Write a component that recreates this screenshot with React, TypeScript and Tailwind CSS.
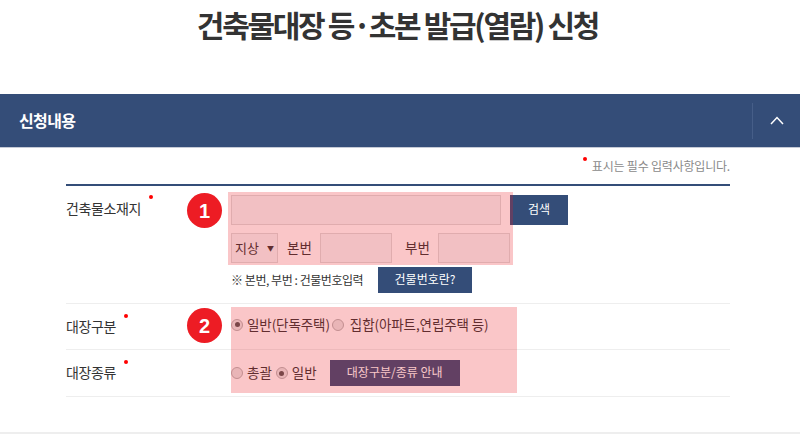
export default function App() {
  return (
    <div className="relative h-[447px] w-[800px] overflow-hidden bg-white font-['Noto_Sans_CJK_KR','Liberation_Sans',sans-serif] text-[#333]">
      <h1 className="flex h-[94px] justify-center pt-[4px] pr-[5px] text-[30px] leading-[40px] font-bold tracking-[-2.3px] text-[#333]">건축물대장 등·초본 발급(열람) 신청</h1>

      <div className="flex h-[54px] items-center justify-between border-b border-[#c5cad6] bg-[#344d78] pb-[2px] pl-[19px]">
        <h2 className="text-[16px] font-bold tracking-[-0.6px] text-white">신청내용</h2>
        <div className="mt-[2px] flex h-[36px] w-[48px] items-center justify-center border-l border-[#465e88]">
          <svg width="14" height="9" viewBox="0 0 14 9" fill="none" stroke="#fff" strokeWidth="1.5"><path d="M1 8l6-6.5L13 8" /></svg>
        </div>
      </div>

      <div className="mx-[66px] mr-[70px]">
        <p className="flex h-[36px] items-start justify-end pt-[10px] text-[12px] leading-[16px] tracking-[-0.2px] text-[#8a8a8a]">
          <span className="mt-[-1px] mr-[5px] h-[4px] w-[4px] rounded-full bg-[#f00]" />
          표시는 필수 입력사항입니다.
        </p>

        <div className="border-t-2 border-[#344d78]">
          <div className="flex h-[118px] border-b border-[#eee]">
            <Label text="건축물소재지" top="pt-[12px]" dot="top-[-3px] left-[83px]" />
            <div className="flex flex-col pt-[9px]">
              <div className="flex gap-[9px]">
                <div className="h-[30px] w-[270px] border border-[#ddd] bg-[#f4f7f8]" />
                <button className="h-[30px] w-[58px] bg-[#344d78] pb-[2px] text-[12px] text-white">검색</button>
              </div>
              <div className="mt-[8px] flex h-[30px] items-center text-[13.5px]">
                <div className="flex h-[30px] w-[47px] items-center justify-between border border-[#ddd] bg-[#f4f7f8] px-[3px] text-[13px]">
                  지상 <span className="text-[7px]">▼</span>
                </div>
                <span className="ml-[9px] w-[33px] pb-[2px]">본번</span>
                <div className="h-[30px] w-[72px] border border-[#ddd] bg-[#f4f7f8]" />
                <span className="ml-[13px] w-[33px] pb-[2px]">부번</span>
                <div className="h-[30px] w-[72px] border border-[#ddd] bg-[#f4f7f8]" />
              </div>
              <div className="mt-[4px] flex h-[26px] items-center">
                <span className="w-[147px] text-[12px] tracking-[-0.45px] text-[#333]">※ 본번, 부번 : 건물번호입력</span>
                <button className="h-[26px] w-[94px] bg-[#344d78] pb-[2px] text-[12px] text-white">건물번호란?</button>
              </div>
            </div>
          </div>

          <div className="flex h-[46px] items-center border-b border-[#eee]">
            <Label text="대장구분" top="pb-[2px]" dot="top-[-2px] left-[58px]" />
            <div className="flex items-center pb-[4px] text-[13.5px] tracking-[-0.1px]">
              <Radio checked />
              <span className="ml-[4px]">일반(단독주택)</span>
              <span className="ml-[2px]"><Radio /></span>
              <span className="ml-[6px]">집합(아파트,연립주택 등)</span>
            </div>
          </div>

          <div className="flex h-[47px] items-center border-b border-[#eee]">
            <Label text="대장종류" top="pb-[2px]" dot="top-[-2px] left-[58px]" />
            <div className="flex items-center text-[13.5px]">
              <Radio />
              <span className="ml-[4px] pb-[2px]">총괄</span>
              <span className="ml-[4px]"><Radio checked /></span>
              <span className="ml-[4px] pb-[2px]">일반</span>
              <button className="ml-[13px] h-[26px] w-[130px] bg-[#344d78] pb-[2px] text-[12px] text-white">대장구분/종류 안내</button>
            </div>
          </div>
        </div>
      </div>

      <div className="mt-[35px] h-[2px] w-full bg-[#eee]" />

      <div className="absolute top-[192px] left-[228px] h-[73px] w-[285px] bg-[#ed1c24]/25" />
      <div className="absolute top-[307px] left-[231px] h-[86px] w-[286px] bg-[#ed1c24]/25" />
      <Badge n="1" top="top-[193px]" />
      <Badge n="2" top="top-[308px]" />
    </div>
  );
}

function Label({ text, top, dot }: { text: string; top: string; dot: string }) {
  return (
    <div className={`w-[165px] shrink-0 text-[14px] leading-[20px] tracking-[-0.4px] ${top}`}>
      <span className="relative inline-block">
        {text}
        <span className={`absolute h-[4px] w-[4px] rounded-full bg-[#f00] ${dot}`} />
      </span>
    </div>
  );
}

function Radio({ checked }: { checked?: boolean }) {
  return (
    <span className="flex h-[12px] w-[12px] items-center justify-center rounded-full border border-[#b5b5b5] bg-[#e8e8e8]">
      {checked && <span className="h-[5px] w-[5px] rounded-full bg-[#555]" />}
    </span>
  );
}

function Badge({ n, top }: { n: string; top: string }) {
  return (
    <div className={`absolute left-[187px] flex h-[35px] w-[35px] items-center justify-center rounded-full bg-[#ed1c24] font-['Liberation_Sans',sans-serif] text-[20px] font-bold text-white ${top}`}>
      {n}
    </div>
  );
}
